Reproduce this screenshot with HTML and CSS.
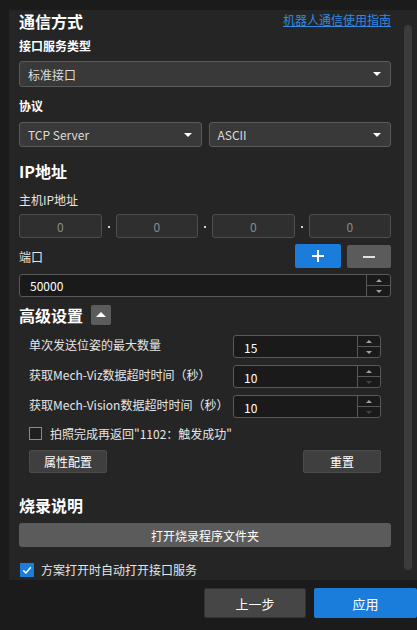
FILE: index.html
```html
<!DOCTYPE html>
<html lang="zh-CN">
<head>
<meta charset="utf-8">
<title>通信方式</title>
<link rel="stylesheet" href="styles.css">
</head>
<body>
<div class="window">
  <div class="panel">
    <div class="content">
      <div class="title-row">
        <h1 class="heading">通信方式</h1>
        <a class="guide-link">机器人通信使用指南</a>
      </div>
      <div class="field-label first">接口服务类型</div>
      <div class="select select-full"><span>标准接口</span><i class="caret"></i></div>
      <div class="field-label">协议</div>
      <div class="select-row">
        <div class="select"><span>TCP Server</span><i class="caret"></i></div>
        <div class="select"><span>ASCII</span><i class="caret"></i></div>
      </div>

      <h2 class="heading ip-heading">IP地址</h2>
      <div class="plain-label">主机IP地址</div>
      <div class="ip-row">
        <div class="ip-box">0</div><span class="ip-dot"></span>
        <div class="ip-box">0</div><span class="ip-dot"></span>
        <div class="ip-box">0</div><span class="ip-dot"></span>
        <div class="ip-box">0</div>
      </div>
      <div class="port-row">
        <span class="port-label">端口</span>
        <div class="port-actions">
          <button class="icon-btn add-btn"><i class="plus"></i></button>
          <button class="icon-btn remove-btn"><i class="minus"></i></button>
        </div>
      </div>
      <div class="spinbox port-spin">
        <span class="spin-value">50000</span>
        <div class="spin-arrows">
          <span class="spin-up"><i class="tri-up"></i></span>
          <span class="spin-down"><i class="tri-down"></i></span>
        </div>
      </div>

      <div class="adv-header">
        <h2 class="heading">高级设置</h2>
        <button class="toggle-btn"><i class="toggle-tri"></i></button>
      </div>
      <div class="adv-body">
        <div class="adv-row">
          <span>单次发送位姿的最大数量</span>
          <div class="spinbox adv-spin">
            <span class="spin-value">15</span>
            <div class="spin-arrows">
              <span class="spin-up"><i class="tri-up"></i></span>
              <span class="spin-down"><i class="tri-down"></i></span>
            </div>
          </div>
        </div>
        <div class="adv-row">
          <span>获取Mech-Viz数据超时时间（秒）</span>
          <div class="spinbox adv-spin">
            <span class="spin-value">10</span>
            <div class="spin-arrows">
              <span class="spin-up"><i class="tri-up"></i></span>
              <span class="spin-down"><i class="tri-down disabled"></i></span>
            </div>
          </div>
        </div>
        <div class="adv-row">
          <span>获取Mech-Vision数据超时时间（秒）</span>
          <div class="spinbox adv-spin">
            <span class="spin-value">10</span>
            <div class="spin-arrows">
              <span class="spin-up"><i class="tri-up"></i></span>
              <span class="spin-down"><i class="tri-down disabled"></i></span>
            </div>
          </div>
        </div>
        <label class="check-row adv-check">
          <span class="checkbox"></span>
          <span>拍照完成再返回"1102：触发成功"</span>
        </label>
        <div class="adv-buttons">
          <button class="flat-btn">属性配置</button>
          <button class="flat-btn">重置</button>
        </div>
      </div>

      <h2 class="heading burn-heading">烧录说明</h2>
      <button class="wide-btn">打开烧录程序文件夹</button>
      <label class="check-row auto-check">
        <span class="checkbox checked">
          <svg viewBox="0 0 14 14" width="14" height="14"><path d="M3.2 7.4 L5.9 10 L10.8 4.2" fill="none" stroke="#fff" stroke-width="1.5"/></svg>
        </span>
        <span>方案打开时自动打开接口服务</span>
      </label>
    </div>
    <div class="scrollbar"></div>
  </div>
  <div class="footer">
    <button class="footer-btn prev-btn">上一步</button>
    <button class="footer-btn apply-btn">应用</button>
  </div>
</div>
</body>
</html>
```

FILE: styles.css
```css
* {
  box-sizing: border-box;
  margin: 0;
  padding: 0;
}

html, body {
  width: 417px;
  height: 630px;
  overflow: hidden;
  background: #1b1b1b;
}

body {
  font-family: "Noto Sans CJK SC", "Noto Sans", sans-serif;
  font-size: 12px;
  color: #e6e6e6;
}

button {
  font-family: inherit;
  border: none;
  cursor: pointer;
}

.window {
  display: flex;
  flex-direction: column;
  height: 630px;
}

.panel {
  margin: 10px 0 0 9px;
  height: 570px;
  background: #252525;
  display: flex;
}

.content {
  width: 372px;
  margin-left: 10px;
  display: flex;
  flex-direction: column;
}

.scrollbar {
  width: 8px;
  height: 545px;
  margin: 15px 0 0 13px;
  background: #3b3b3b;
  border-radius: 4px;
}

.title-row {
  display: flex;
  justify-content: space-between;
  align-items: center;
  height: 22px;
}

.heading {
  font-size: 16px;
  font-weight: bold;
  line-height: 22px;
  color: #ffffff;
}

.guide-link {
  font-size: 12px;
  line-height: 20px;
  color: #2f8ae4;
  text-decoration: underline;
  margin-top: -2px;
}

.field-label {
  font-weight: bold;
  line-height: 20px;
  color: #ffffff;
  margin-top: 9px;
}

.field-label.first {
  margin-top: 4px;
}

.select {
  height: 25px;
  background: #393939;
  border: 1px solid #5a5a5a;
  border-radius: 3px;
  display: flex;
  align-items: center;
  justify-content: space-between;
  padding: 0 9px 0 8px;
  color: #dcdcdc;
}

.select-full {
  height: 26px;
  margin-top: 5px;
}

.caret {
  width: 0;
  height: 0;
  border-left: 4px solid transparent;
  border-right: 4px solid transparent;
  border-top: 4px solid #ffffff;
}

.select-row {
  display: grid;
  grid-template-columns: 1fr 1fr;
  gap: 7px;
  margin-top: 6px;
}

.ip-heading {
  margin-top: 13px;
}

.plain-label {
  line-height: 20px;
  margin-top: 8px;
  color: #e6e6e6;
}

.ip-row {
  display: flex;
  align-items: center;
  height: 24px;
  margin-top: 4px;
}

.ip-box {
  flex: 1;
  height: 24px;
  background: #2f2f2f;
  border: 1px solid #4e4e4e;
  border-radius: 3px;
  display: flex;
  align-items: center;
  justify-content: center;
  color: #8a8a8a;
}

.ip-dot {
  width: 14px;
  display: flex;
  justify-content: center;
  align-items: center;
  height: 24px;
}

.ip-dot::before {
  content: "";
  width: 2px;
  height: 2px;
  background: #d0d0d0;
  margin-top: 2px;
}

.port-row {
  display: flex;
  justify-content: space-between;
  align-items: center;
  height: 24px;
  margin-top: 6px;
}

.port-label {
  line-height: 20px;
  margin-top: 2px;
}

.port-actions {
  display: flex;
  gap: 6px;
  align-items: flex-start;
}

.icon-btn {
  height: 24px;
  border-radius: 2px;
  display: flex;
  align-items: center;
  justify-content: center;
}

.add-btn {
  width: 46px;
  background: #1b7ddb;
}

.remove-btn {
  width: 44px;
  height: 23px;
  margin-top: 1px;
  background: #5b5b5b;
}

.plus {
  position: relative;
  width: 12px;
  height: 12px;
}

.plus::before, .plus::after {
  content: "";
  position: absolute;
  background: #ffffff;
}

.plus::before {
  left: 0;
  top: 5px;
  width: 12px;
  height: 2px;
}

.plus::after {
  left: 5px;
  top: 0;
  width: 2px;
  height: 12px;
}

.minus {
  width: 12px;
  height: 2px;
  background: #e0e0e0;
}

.spinbox {
  display: flex;
  height: 23px;
  background: #1a1a1a;
  border: 1px solid #585858;
  border-radius: 3px;
}

.port-spin {
  margin-top: 6px;
}

.spin-value {
  flex: 1;
  display: flex;
  align-items: center;
  padding-left: 10px;
  color: #ffffff;
}

.spin-arrows {
  width: 24px;
  border-left: 1px solid #585858;
  display: flex;
  flex-direction: column;
}

.spin-up, .spin-down {
  flex: 1;
  display: flex;
  align-items: center;
  justify-content: center;
}

.spin-up {
  border-bottom: 1px solid #585858;
}

.tri-up {
  width: 0;
  height: 0;
  border-left: 3px solid transparent;
  border-right: 3px solid transparent;
  border-bottom: 3px solid #a0a0a0;
}

.tri-down {
  width: 0;
  height: 0;
  border-left: 3px solid transparent;
  border-right: 3px solid transparent;
  border-top: 3px solid #a0a0a0;
}

.tri-down.disabled {
  border-top-color: #444444;
}

.adv-header {
  display: flex;
  align-items: center;
  gap: 8px;
  height: 20px;
  margin-top: 8px;
}

.toggle-btn {
  width: 20px;
  height: 20px;
  background: #5c5c5c;
  border-radius: 2px;
  display: flex;
  align-items: center;
  justify-content: center;
}

.toggle-tri {
  width: 0;
  height: 0;
  border-left: 5px solid transparent;
  border-right: 5px solid transparent;
  border-bottom: 5px solid #ffffff;
  margin-top: -1px;
}

.adv-body {
  padding: 0 10px;
  display: flex;
  flex-direction: column;
  margin-top: 10px;
}

.adv-row {
  display: flex;
  justify-content: space-between;
  align-items: center;
  height: 23px;
  margin-bottom: 7px;
}

.adv-row > span {
  line-height: 20px;
  margin-top: -3px;
}

.adv-spin {
  width: 148px;
  height: 23px;
}

.adv-spin .spin-arrows {
  width: 23px;
}

.adv-spin .spin-value {
  padding-top: 1px;
}

.check-row {
  display: flex;
  align-items: center;
  height: 13px;
  line-height: 20px;
}

.adv-check {
  gap: 8px;
  margin-top: 2px;
}

.checkbox {
  width: 13px;
  height: 13px;
  border: 1px solid #8c8c8c;
  background: #1f1f1f;
  flex: none;
}

.adv-buttons {
  display: flex;
  justify-content: space-between;
  margin-top: 10px;
}

.flat-btn {
  width: 78px;
  height: 23px;
  background: #3f3f3f;
  border: 1px solid #4a4a4a;
  border-radius: 2px;
  color: #ffffff;
  font-size: 12px;
}

.burn-heading {
  margin-top: 21px;
}

.wide-btn {
  height: 24px;
  margin-top: 7px;
  background: #5b5b5b;
  border-radius: 3px;
  color: #ffffff;
  font-size: 12px;
}

.auto-check {
  gap: 7px;
  margin-top: 16px;
  padding-left: 1px;
}

.checkbox.checked {
  width: 14px;
  height: 14px;
  border: none;
  background: #1b7ddb;
  display: flex;
}

.footer {
  display: flex;
  justify-content: flex-end;
  gap: 8px;
  padding-top: 8px;
}

.footer-btn {
  height: 30px;
  font-size: 13px;
  color: #ffffff;
  border-radius: 2px;
}

.prev-btn {
  width: 102px;
  background: #464646;
  border: 1px solid #333333;
}

.apply-btn {
  width: 103px;
  background: #1b7ddb;
}
```
